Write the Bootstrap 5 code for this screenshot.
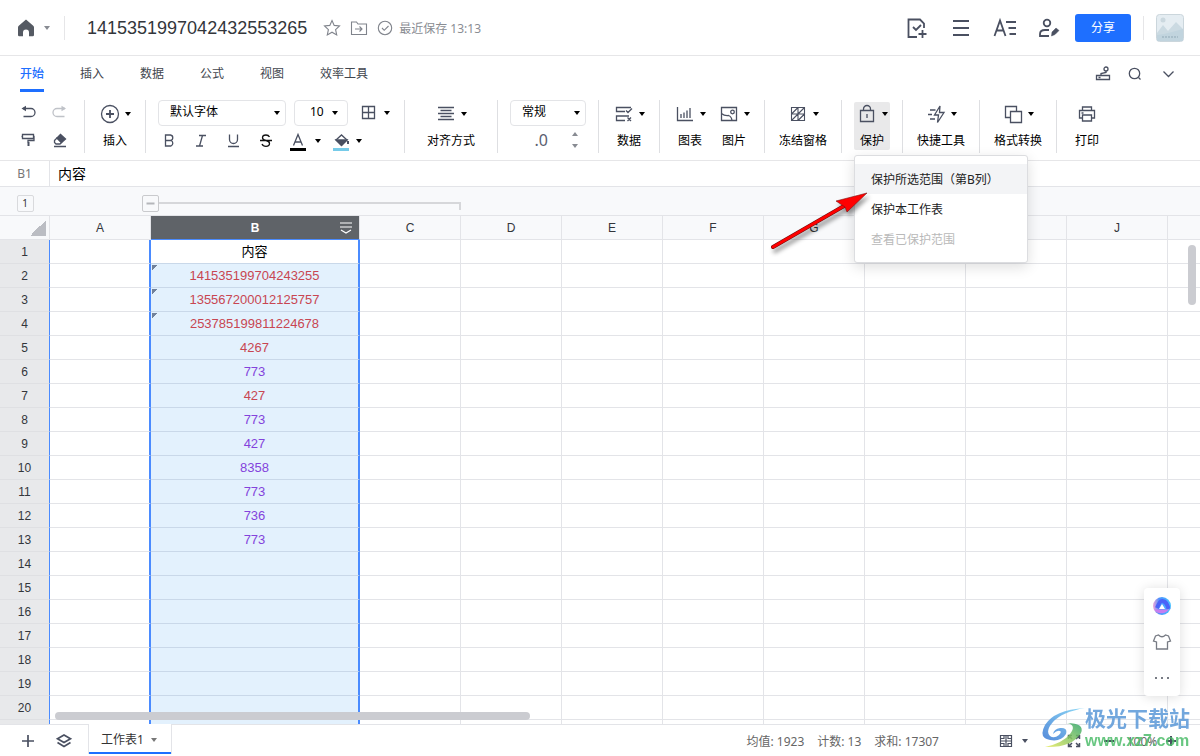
<!DOCTYPE html>
<html lang="zh-CN">
<head>
<meta charset="utf-8">
<meta name="viewport" content="width=device-width, initial-scale=1">
<title>1415351997042432553265</title>
<link href="https://cdn.jsdelivr.net/npm/bootstrap@5.3.0/dist/css/bootstrap.min.css" rel="stylesheet">
<style>
:root{--line:#e3e4e8;--ink:#4a5061;--blue:#1e6fff;--pick:#4a8bff}
body{font:12px/18px "Noto Sans","Noto Sans CJK SC",sans-serif;color:#111;background:#fff}
svg{display:block;flex:none;overflow:visible}
.ic{fill:none;stroke:var(--ink);stroke-width:1.3}
.ic.soft{stroke:#80848c;stroke-width:1.1}
.ic.bold{stroke-width:1.8}
.ibtn{border:0;background:none;padding:0;color:var(--ink);display:flex;align-items:center;justify-content:center}
.caret{width:6px;height:4px;fill:#000}
.topbar{height:56px;border-bottom:1px solid #e6e6e8;padding:0 12px 0 16px}
.doc-title{font:18px/24px "Liberation Sans",sans-serif;color:#33363b;margin:0 16px 0 22px}
.vline{width:1px;height:24px;background:#e6e6e8;margin:0 0 0 14px}
.vline.right{margin-left:12px}
.saved{color:#8a8d93;margin-left:6px;padding-top:2px}
.share{width:56px;height:28px;background:var(--blue);border-radius:3px;font-size:12px;line-height:18px}
.tabs{height:36px;padding:0 20px;gap:36px}
.tabs .nav-link{padding:9px 0 6px;color:#42464e;border-bottom:3px solid transparent;line-height:18px}
.tabs .nav-link.active{color:var(--blue);border-color:var(--blue);font-weight:500}
.tools{padding:8px 0 7px;border-bottom:1px solid #e6e6e8}
.group{height:53px;border-right:1px solid #dedfe2;padding:0 12px}
.group.last{border:0}
.group.fonts{min-width:259px}
.tool{border:0;background:none;min-width:36px;height:48px;margin-top:2px;padding:1px 0 0;border-radius:2px;color:#000;display:flex;flex-direction:column;align-items:center;gap:7px;white-space:nowrap}
.tool.mid{min-width:52px}.tool.wide{min-width:68px}
.tool.open{background:#e9e9ea}
.tool .top{display:flex;align-items:center;gap:5px;height:22px}
.sel{height:26px;border:1px solid #e3e4e7;border-radius:4px;font-size:12px;line-height:18px;padding:0 0 2px 11px;color:#000;background-position:right 5px center;background-size:6px 4px;background-image:url("data:image/svg+xml,%3Csvg xmlns='http://www.w3.org/2000/svg' viewBox='0 0 6 4'%3E%3Cpath d='M0 0h6L3 4z'/%3E%3C/svg%3E")}
.sel.font{width:128px}.sel.size{width:54px;padding-left:15px;background-position:right 9px center}.sel.fmt{width:76px}
.decimals{height:26px}
.decimals span{font-size:16px;line-height:24px;color:#5b6070}
.fx{height:26px;border-bottom:1px solid var(--line)}
.fx .ref{width:50px;border-right:1px solid var(--line);color:#777;text-align:center;line-height:25px}
.fx input{border:0;outline:0;font-size:14px;line-height:24px;padding:0 8px;color:#000}
.outline-row{height:29px;background:#f8f9fb;border-bottom:1px solid var(--line);padding-top:8px}
.outline-row .lead-cell{width:50px;margin-right:92px}
.lvl{width:17px;height:17px;border:1px solid #d9dadd;border-radius:2px;background:#f8f9fb;font-size:10px;line-height:15px;text-align:center;padding:0;color:#333}
.lvl.fold{border-color:#c9cacd}
.track{width:302px;height:8px;border:solid #d6d7da;border-width:2px 2px 0 0;margin-top:7px}
.area{min-height:0}
.grid{table-layout:fixed;border-collapse:separate;border-spacing:0;width:0}
.grid th,.grid td{height:24px;padding:0;border:solid var(--line);border-width:0 1px 1px 0;text-align:center;font:12px/22px "Liberation Sans",sans-serif;overflow:hidden}
.grid thead th{background:#f8f9fb;color:#33363b}
.grid tbody th{background:#e8e9eb;border-right-color:var(--pick);border-bottom-color:#dfe0e3;color:#33363b}
.grid td{font:13px/22px "Liberation Sans","Noto Sans CJK SC",sans-serif;padding-top:1px}
.grid td:nth-child(2){border-right:2px solid var(--pick)}
.grid td:nth-child(3){border-right:2px solid var(--pick);border-bottom-color:#c9d8e9;background:#e3f1fd}
.grid tbody tr:first-child td:nth-child(3){background:#fff;color:#000}
.grid thead th.on{background:#5f6368;color:#fff;border-bottom-color:var(--pick);font-weight:700;position:relative}
.on svg{position:absolute;right:7px;top:6px}
.grid .corner{background:linear-gradient(135deg,transparent 50%,#bbbdc3 50%) 30px 4px/16px 16px no-repeat #f8f9fb}
.grid .red{color:#c84652}.grid .vio{color:#8343dc}
.grid td.txt{background:linear-gradient(135deg,#71819a 4px,transparent 4px) 1px 1px/8px 8px no-repeat #e3f1fd}
.bar-v,.bar-h{position:absolute;background:#cbccd1;border-radius:4px}
.bar-v{right:4px;top:29px;width:8px;height:60px}
.bar-h{left:55px;bottom:4px;width:475px;height:8px}
.side{position:absolute;right:20px;bottom:28px;width:36px;height:108px;border-radius:4px;background:#fff;box-shadow:0 1px 12px #0002;padding:8px 0}
.dropdown-menu.menu{position:absolute;left:0;top:53px;width:174px;min-width:0;border:1px solid #dcdde0;border-radius:3px;padding:8px 0;margin:0;box-shadow:0 4px 14px #0002;font-size:12px;z-index:20}
.menu .dropdown-item{padding:7px 16px 5px;line-height:18px;color:#222}
.menu .dropdown-item.hot{background:#f3f4f6}
.menu .dropdown-item.disabled{color:#b9b9b9}
.pointer{position:absolute;left:-88px;top:82px;z-index:21;filter:drop-shadow(2px 4px 2px #0006);pointer-events:none}
.foot{height:32px;border-top:1px solid var(--line);color:#666}
.sheet{height:30px;margin-top:-1px;border:solid var(--line);border-width:0 1px;box-shadow:inset 0 -2px var(--blue);background:#fff;padding:2px 14px 0 12px;color:#333;gap:7px}
.stats{gap:13px;margin-right:59px;padding-top:2px}
.zoom-value{width:36px;padding-top:2px}
.stamp{position:fixed;right:10px;bottom:6px;z-index:30;opacity:.85;pointer-events:none;white-space:nowrap}
.stamp b{display:block;font-size:21px;line-height:26px;color:#5a98d8}
.stamp span{display:block;font:bold 16px/19px "Liberation Sans",sans-serif;color:#4ebd6b}
</style>
</head>
<body class="vh-100 d-flex flex-column overflow-hidden">
<svg width="0" height="0" class="position-absolute"><symbol id="dn" viewBox="0 0 6 4"><path d="M0 0h6L3 4z"/></symbol></svg>

<header class="topbar d-flex align-items-center flex-shrink-0">
  <button class="ibtn gap-2" aria-label="主页"><svg width="20" height="20"><path d="M10 1.500 2.500 8Q2 8.500 2 9.500V17q0 1.300 1.300 1.300H7V14.500a3 3 0 0 1 6 0v3.800h3.700Q18 18.300 18 17V9.500Q18 8.500 17.500 8Z" fill="#555a63"/></svg><svg class="caret" style="fill:#888b92"><use href="#dn"/></svg></button>
  <span class="vline"></span>
  <h1 class="doc-title">1415351997042432553265</h1>
  <button class="ibtn" aria-label="收藏"><svg class="ic soft" width="18" height="18"><path d="m9 1.500 2.200 4.900 5.300.6-3.900 3.600 1.100 5.300L9 13.200l-4.700 2.700 1.100-5.300L1.500 7l5.300-.6Z"/></svg></button>
  <button class="ibtn ms-2" aria-label="移动"><svg class="ic soft" width="20" height="18"><path d="M2.500 3h5l1.500 2h8.500v10.500h-15ZM6 10h7M10.500 7.500 13 10l-2.500 2.500"/></svg></button>
  <svg class="ic soft ms-2" width="16" height="16"><circle cx="8" cy="8" r="6.700"/><path d="m5 8 2.200 2.300L11.500 6"/></svg>
  <span class="saved">最近保存 13:13</span>
  <div class="ms-auto d-flex align-items-center">
    <div class="d-flex gap-4 me-3">
      <button class="ibtn" aria-label="新建待办"><svg class="ic bold" width="20" height="22" viewBox="1 0 20 22"><path d="M11 20H2.500V2.500H14l4 4V11M7 10l3 3 5-5M16.500 13v8M12.500 17h8"/></svg></button>
      <button class="ibtn" aria-label="菜单"><svg class="ic bold" width="20" height="22"><path d="M2 4h16M2 11h16M2 18h16"/></svg></button>
      <button class="ibtn" aria-label="文字样式"><svg class="ic bold" width="20" height="22" viewBox="2 0 20 22"><path d="M1.500 19 7 3.500 12.500 19M3.500 13.500h7M13 5h10M15.500 11H23M16.500 17H23"/></svg></button>
      <button class="ibtn" aria-label="协作"><svg class="ic bold" width="20" height="22"><circle cx="8" cy="6" r="3.300"/><path d="M10 19H1v-2q0-4 5-4h4"/><path d="m13 15 4-4 3 2.500-4 4-3.500 1.500Z" fill="#4a5061" stroke-width=".5"/></svg></button>
    </div>
    <button class="btn btn-primary share border-0 p-0">分享</button>
    <span class="vline right"></span>
    <svg class="ms-2" width="36" height="28" viewBox="-4 0 36 28"><rect x=".5" y=".5" width="27" height="27" rx="3" fill="#e5edf2" stroke="#cbd6dc"/><circle cx="7" cy="6" r="2.500" fill="#cbd8df"/><path d="M1 19 7 11l5 6 8-9 7 7v11H1Z" fill="#cbdae2"/><path d="M1 21 8 20l8-2 11-3v12H1Z" fill="#c1d4de"/><path d="M6 23h16" stroke="#91a9b6" stroke-dasharray="2 1"/></svg>
  </div>
</header>

<div class="d-flex flex-shrink-0">
  <nav class="nav tabs">
    <a class="nav-link active" href="#">开始</a><a class="nav-link" href="#">插入</a><a class="nav-link" href="#">数据</a><a class="nav-link" href="#">公式</a><a class="nav-link" href="#">视图</a><a class="nav-link" href="#">效率工具</a>
  </nav>
  <div class="ms-auto d-flex align-items-center gap-3 pe-4">
    <button class="ibtn" aria-label="操作"><svg class="ic" width="16" height="16"><path d="M1.500 9.500h13v4h-13ZM3.500 11.500h2M6 9.500V7.500l5-1V5"/><circle cx="11" cy="3" r="2"/></svg></button>
    <button class="ibtn" aria-label="搜索"><svg class="ic" width="15" height="16"><circle cx="7.500" cy="7.500" r="5.200"/><path d="m11.500 11.500 2 2"/></svg></button>
    <button class="ibtn ms-1" aria-label="收起"><svg class="ic" width="14" height="16"><path d="m1.500 5.500 5 5 5-5"/></svg></button>
  </div>
</div>

<div class="tools d-flex flex-shrink-0">
  <div class="group d-flex flex-column justify-content-between py-1">
    <div class="d-flex">
      <button class="ibtn" aria-label="撤销"><svg class="ic" width="32" height="18"><path d="M11 4.500h8a3.900 3.900 0 0 1 0 8h-7.500"/><path d="M9.500 4.500 14 1.800v5.400Z" fill="#4a5061" stroke="none"/></svg></button>
      <button class="ibtn" aria-label="重做"><svg class="ic" width="28" height="18" style="stroke:#bfc2c8"><path d="M21 4.500h-8a3.900 3.900 0 0 0 0 8h7.500"/><path d="M22 4.500 17.500 1.800v5.400Z" fill="#bfc2c8" stroke="none"/></svg></button>
    </div>
    <div class="d-flex">
      <button class="ibtn" aria-label="格式刷"><svg class="ic" width="32" height="18"><path d="M10.500 3.500h11v4h-11ZM10.500 5.500h-1M21.500 5.500h.5v4H16v2"/><path d="M16.500 11v4" stroke-width="2"/></svg></button>
      <button class="ibtn" aria-label="清除格式"><svg class="ic" width="28" height="18"><path d="M10 15.500h12M10.500 9.500 13 7l4.500 4.500-1.500 1.500h-4l-1.500-1.500Z"/><path d="m13 7 3.500-3.500L21.500 8l-4 3.500Z" fill="#4a5061"/></svg></button>
    </div>
  </div>
  <div class="group"><button class="tool"><span class="top"><svg class="ic" width="20" height="20"><circle cx="10" cy="10" r="8.500"/><path d="M10 6v8M6 10h8" stroke-width="1.800"/></svg><svg class="caret"><use href="#dn"/></svg></span>插入</button></div>
  <div class="group fonts d-flex flex-column justify-content-between">
    <div class="d-flex gap-2">
      <select class="form-select sel font" aria-label="字体"><option>默认字体</option></select>
      <select class="form-select sel size" aria-label="字号"><option>10</option></select>
      <button class="ibtn ms-1 gap-2" aria-label="边框"><svg class="ic" width="16" height="16"><path d="M2.500 1.500h12v12h-12ZM8.500 1.500v12M2.500 7.500h12"/></svg><svg class="caret"><use href="#dn"/></svg></button>
    </div>
    <div class="d-flex">
      <button class="ibtn" aria-label="加粗"><svg class="ic" width="24" height="24"><path d="M7.500 6h5a2.800 2.800 0 0 1 0 5.500h-5ZM7.500 11.500H13a3 3 0 0 1 0 5.500H7.500Z"/></svg></button>
      <button class="ibtn ms-2" aria-label="倾斜"><svg class="ic" width="24" height="24"><path d="M9 6.500h7M6 17h7M12.500 6.500l-3 10.500"/></svg></button>
      <button class="ibtn ms-2" aria-label="下划线"><svg class="ic" width="24" height="24"><path d="M7.500 5.500v5a4 4 0 0 0 8 0v-5M6 17.500h11"/></svg></button>
      <button class="ibtn ms-2" aria-label="删除线"><svg class="ic" width="24" height="24" style="stroke:#111"><path d="M15.500 8q-1-2-3.500-2-3.500 0-3.500 2.700 0 2 3.500 2.800 3.500.7 3.500 3 0 2.800-3.500 2.800-3 0-4-2.300M6 11.500h12"/></svg></button>
      <button class="ibtn ms-2" aria-label="文字颜色"><svg class="ic" width="29" height="24"><path d="m7.500 16.500 4.500-11 4.500 11M9 13h6"/><path d="M4 20.500h16" stroke="#000" stroke-width="3"/></svg><svg class="caret"><use href="#dn"/></svg></button>
      <button class="ibtn ms-2" aria-label="填充颜色"><svg class="ic" width="27" height="24"><path d="m7 11 5.500-5 5.500 5-5.500 5Z"/><path d="M7 11h11l-5.500 5.500Z" fill="#4a5061"/><path d="M19 12v3" stroke-width="2"/><path d="M4 20.500h16" stroke="#76cbe9" stroke-width="3"/></svg><svg class="caret"><use href="#dn"/></svg></button>
    </div>
  </div>
  <div class="group"><button class="tool wide"><span class="top"><svg class="ic" width="20" height="20"><path d="M2 3.500h16M4.500 6.500h11M2 9.500h16M4.500 12.500h11M2 15.500h16"/></svg><svg class="caret"><use href="#dn"/></svg></span>对齐方式</button></div>
  <div class="group d-flex flex-column justify-content-between">
    <select class="form-select sel fmt" aria-label="数字格式"><option>常规</option></select>
    <div class="decimals d-flex align-items-center justify-content-end gap-4 pe-2"><span>.0</span>
      <button class="ibtn" aria-label="小数位数"><svg width="6" height="18" fill="#888b92"><path d="M0 5h6L3 1zM0 13h6l-3 4z"/></svg></button></div>
  </div>
  <div class="group"><button class="tool"><span class="top"><svg class="ic" width="20" height="20"><path d="M17 3.500H2.500v4H11M11 12H2.500v4.500H11M11 12h4M12 6.500l2 2 4-4M13.500 13.500l3.500 3.500M17 13.500 13.500 17"/></svg><svg class="caret"><use href="#dn"/></svg></span>数据</button></div>
  <div class="group d-flex gap-2">
    <button class="tool"><span class="top"><svg class="ic" width="20" height="20"><path d="M2.500 3v13.500H18M6 10v4M9 8.500V14M12 6.500V14M15 4v10"/></svg><svg class="caret"><use href="#dn"/></svg></span>图表</button>
    <button class="tool"><span class="top"><svg class="ic" width="20" height="20"><path d="M2.500 3.500h15v13h-15ZM2.500 9.500q3 2.500 7 2 3 1 3.500 5"/><circle cx="13.500" cy="8" r="1.800"/></svg><svg class="caret"><use href="#dn"/></svg></span>图片</button>
  </div>
  <div class="group"><button class="tool mid"><span class="top"><svg class="ic" width="20" height="20" style="stroke-width:1.100"><path d="M3.500 3.500h13v13h-13ZM10 3.500v13M3.500 10h13M3.500 10 10 3.500M3.500 16.500l13-13M10 16.500l6.500-6.500"/></svg><svg class="caret"><use href="#dn"/></svg></span>冻结窗格</button></div>
  <div class="group">
    <div class="dropdown">
      <button class="tool open" aria-expanded="true"><span class="top"><svg class="ic" width="20" height="20"><path d="M3.500 6.500h13v11h-13ZM6.500 6.500V5a3.500 3.500 0 0 1 7 0v1.500M10 10v4"/></svg><svg class="caret"><use href="#dn"/></svg></span>保护</button>
      <div class="dropdown-menu show menu">
        <a class="dropdown-item hot" href="#">保护所选范围（第B列）</a>
        <a class="dropdown-item" href="#">保护本工作表</a>
        <a class="dropdown-item disabled" href="#" aria-disabled="true">查看已保护范围</a>
      </div>
      <svg class="pointer" width="110" height="70"><path d="M7 63 78 22" stroke="#6b1010" stroke-width="4" stroke-linecap="round"/><path d="M7 63 78 22" stroke="#f00" stroke-width="3" stroke-linecap="round"/><path d="m101 9-20 19-2-5-9-6Z" fill="#f00" stroke="#7b1010" stroke-width=".6"/></svg>
    </div>
  </div>
  <div class="group"><button class="tool mid"><span class="top"><svg class="ic" width="20" height="20"><path d="M14 2 8.500 11h4l-1 7.500L18 8.500h-4.500ZM4 6h5.500M2 10.500h4M4 15h5"/></svg><svg class="caret"><use href="#dn"/></svg></span>快捷工具</button></div>
  <div class="group"><button class="tool mid"><span class="top"><svg class="ic" width="20" height="20"><path d="M7 13.500H2.500v-11h11V7M7.500 7.500h11v11h-11Z"/></svg><svg class="caret"><use href="#dn"/></svg></span>格式转换</button></div>
  <div class="group last"><button class="tool"><span class="top"><svg class="ic" width="20" height="20"><path d="M5.500 6.500V3h9v3.500M5.500 14h-3V6.500h15V14h-3M5.500 11h9v6h-9ZM4.500 9h2"/></svg></span>打印</button></div>
</div>

<div class="fx d-flex flex-shrink-0"><span class="ref">B1</span><input class="flex-grow-1" aria-label="单元格内容" value="内容"></div>
<div class="outline-row d-flex align-items-start flex-shrink-0">
  <div class="lead-cell d-flex justify-content-center"><button class="lvl">1</button></div>
  <button class="lvl fold" aria-label="折叠分组"><svg width="15" height="15"><path d="M3.500 7.500h8" stroke="#b5b6ba" stroke-width="2"/></svg></button><span class="track"></span>
</div>

<main class="area flex-grow-1 position-relative overflow-hidden">
  <table class="grid">
    <colgroup id="cols"></colgroup>
    <thead><tr id="head"></tr></thead>
    <tbody id="rows"></tbody>
  </table>
  <div class="bar-v"></div><div class="bar-h"></div>
  <aside class="side d-flex flex-column align-items-center justify-content-between">
    <button class="ibtn" aria-label="助手"><svg width="20" height="20"><defs><linearGradient id="g1" x1="0" y1="0" x2="1" y2="0"><stop offset="0" stop-color="#f0a4d8"/><stop offset=".35" stop-color="#4a90ff"/><stop offset="1" stop-color="#4ac3ff"/></linearGradient></defs><circle cx="10" cy="10" r="9" fill="url(#g1)"/><path d="M5 12Q8 4 11 5q4 1 5.500 8" fill="none" stroke="#4a62f8" stroke-width="4"/><path d="M7 13l3-5 3 5Z" fill="#fff"/><path d="M2.500 13.500h12a3 3 0 0 0 3-1A9 9 0 0 1 2.500 14Z" fill="#c77df0"/></svg></button>
    <button class="ibtn" aria-label="皮肤"><svg class="ic" width="20" height="18" style="stroke:#777b84"><path d="M6.500 2q3.500 3.500 7 0l3 1 2 5-3 1v7h-11V9l-3-1 2-5Z"/></svg></button>
    <button class="ibtn" aria-label="更多"><svg width="20" height="20" fill="#777b84"><path d="M3 9h2v2H3zM9 9h2v2H9zM15 9h2v2h-2z"/></svg></button>
  </aside>
</main>

<footer class="foot d-flex align-items-center flex-shrink-0">
  <div class="d-flex align-items-start h-100">
    <div class="d-flex gap-3 px-3 pt-2"><button class="ibtn" aria-label="新建工作表"><svg class="ic" width="20" height="16"><path d="M12 2v12M6 8h12" stroke-width="1.700"/></svg></button>
    <button class="ibtn" aria-label="工作表列表"><svg class="ic" width="20" height="16" style="stroke-width:1.700"><path d="m12 2 6.500 3.700L12 9.500 5.500 5.700ZM5.500 9.500l6.500 4 6.500-4"/></svg></button></div>
    <button class="ibtn sheet">工作表1<svg class="caret" style="fill:#777"><use href="#dn"/></svg></button>
  </div>
  <div class="ms-auto d-flex align-items-center">
    <div class="stats d-flex"><span>均值: 1923</span><span>计数: 13</span><span>求和: 17307</span></div>
    <button class="ibtn gap-2" aria-label="视图"><svg class="ic" width="16" height="16" style="stroke-width:1.500"><path d="M2.500 2.500h11v11h-11ZM8 2.500v11M2.500 8h11M6 3v2.500H3M10 3v2.500h3M6 13v-2.500H3M10 13v-2.500h3" stroke-width="1.200"/></svg><svg class="caret" style="fill:#4a5061"><use href="#dn"/></svg></button>
    <button class="ibtn ms-4 ps-3" aria-label="全屏"><svg class="ic" width="12" height="14" style="stroke-width:1.500"><path d="M.5 5V1.500H4M1 2l3 3M8 1.500h3.500V5M11 2 8 5M.5 9v3.500H4M1 12l3-3M8 12.500h3.500V9M11 12 8 9"/></svg></button>
    <button class="ibtn ms-4" aria-label="缩小"><svg class="ic" width="10" height="10" style="stroke-width:2"><path d="M0 5h10"/></svg></button>
    <span class="zoom-value ms-2 ps-1 text-center">100%</span>
    <button class="ibtn ms-2 me-4" aria-label="放大"><svg class="ic" width="10" height="10" style="stroke-width:2"><path d="M0 5h10M5 0v10"/></svg></button>
  </div>
</footer>

<div class="stamp d-flex align-items-center">
  <svg width="44" height="44" viewBox="0 0 44 44"><defs><linearGradient id="g2" x1="0" y1="1" x2="1" y2="0"><stop offset="0" stop-color="#3978d4"/><stop offset="1" stop-color="#7ad3f5"/></linearGradient><linearGradient id="g3" x1="0" y1="1" x2="1" y2="0"><stop offset="0" stop-color="#e8ea5c"/><stop offset="1" stop-color="#30a66b"/></linearGradient></defs><path d="M44 2Q13 4 4 19q-7 13 5 15 11 2 16-6 2-7-6-6-6 1-7 6 4-4 7-3 2 1-1 4-5 4-9 1-5-5 3-14Q21 6 44 2Z" fill="url(#g2)"/><path d="M26 17q10 2 3 11-7 9-25 13 27 1 36-14 4-10-14-10Z" fill="url(#g3)"/></svg>
  <div><b>极光下载站</b><span>www.xz7.com</span></div>
</div>

<script src="https://cdn.jsdelivr.net/npm/bootstrap@5.3.0/dist/js/bootstrap.bundle.min.js"></script>
<script>
// Values of column B: [text, classes].
const data = [['内容'], ['141535199704243255', 'red txt'], ['135567200012125757', 'red txt'], ['253785199811224678', 'red txt'],
  ['4267', 'red'], ['773', 'vio'], ['427', 'red'], ['773', 'vio'], ['427', 'vio'], ['8358', 'vio'], ['773', 'vio'], ['736', 'vio'], ['773', 'vio']];
const byId = id => document.getElementById(id);

// Draws only as many columns and rows as the window shows.
function draw() {
  const area = document.querySelector('.area');
  const count = Math.min(26, Math.max(3, Math.ceil((area.clientWidth - 158) / 101)));
  const names = Array.from({length: count}, (_, i) => String.fromCharCode(65 + i));
  const centreShown = 158 + 101 * count - 50 < area.clientWidth;
  const total = Math.ceil((area.clientHeight - 24) / 24);
  byId('cols').innerHTML = '<col style="width:50px">' +
    names.map(n => `<col style="width:${n === 'B' ? 209 : 101}px">`).join('');
  byId('head').innerHTML = '<th class="corner" aria-label="全选"></th>' + names.map((n, i) =>
    n === 'B' ? '<th class="on">B<svg width="12" height="12" fill="none" stroke="#fff" stroke-width="1.2"><path d="M0 1h12M0 5h12M1 8l5 3 5-3"/></svg></th>'
      : `<th>${i < count - 1 || centreShown ? n : ''}</th>`).join('');
  let html = '';
  for (let r = 0; r < total; r++) {
    const [v = '', c = ''] = data[r] || [];
    const label = 24 * (r + 2) <= area.clientHeight ? r + 1 : '';
    html += `<tr><th>${label}</th>` + names.map(n => n === 'B' ? `<td class="${c}">${v}</td>` : '<td></td>').join('') + '</tr>';
  }
  byId('rows').innerHTML = html;
}
draw();
addEventListener('resize', draw);
</script>
</body>
</html>
